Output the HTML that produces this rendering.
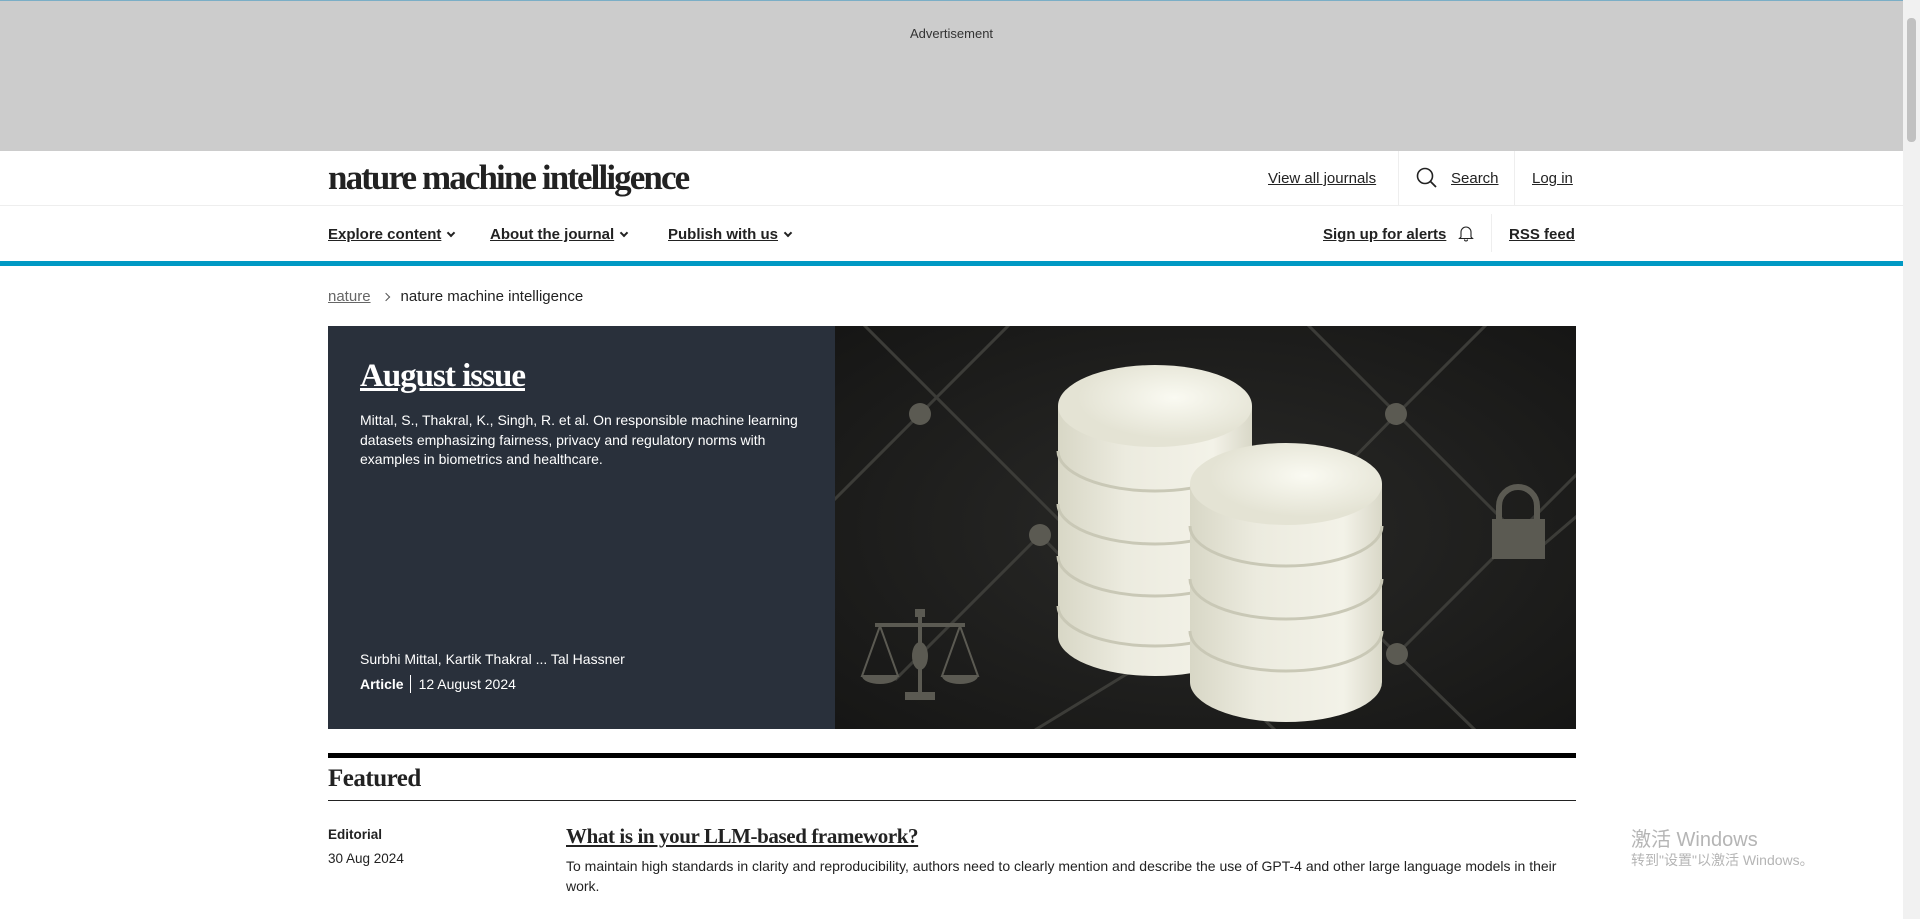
<!DOCTYPE html>
<html><head><meta charset="utf-8"><style>
*{margin:0;padding:0;box-sizing:border-box}
body{width:1920px;height:919px;overflow:hidden;background:#fff;font-family:"Liberation Sans",sans-serif;color:#222;position:relative}
.abs{position:absolute}
a{color:#222}
.sb{position:absolute;right:0;top:0;width:17px;height:919px;background:#f1f1f1}
.sb div{position:absolute;left:4px;top:18px;width:9px;height:124px;background:#c1c1c1;border-radius:4px}
.ad{position:absolute;left:0;top:0;width:1903px;height:151px;background:#cccccc;border-top:1px solid #7aaec6}
.ad span{position:absolute;left:0;width:100%;top:25px;text-align:center;font-size:13px;color:#333}
.logo{left:328px;top:158px;font-family:"Liberation Serif",serif;font-weight:bold;font-size:35px;letter-spacing:-1.9px;color:#222;white-space:nowrap}
.hl{left:0;width:1903px;height:1px;background:#eee}
.nav{top:226px;font-size:15px;font-weight:bold;text-decoration:underline;white-space:nowrap}
.chev{display:inline-block;width:6px;height:6px;border-right:2px solid #222;border-bottom:2px solid #222;transform:rotate(45deg);margin-left:7px;position:relative;top:-3px}
.tl{top:170px;font-size:15px;text-decoration:underline;white-space:nowrap}
.hero{left:328px;top:326px;width:1248px;height:403px;background:#29303b;overflow:hidden}
</style></head><body>
<div class="ad"><span>Advertisement</span></div>
<div class="abs logo">nature machine intelligence</div>
<div class="abs tl" style="left:1268px">View all journals</div>
<div class="abs" style="left:1398px;top:151px;width:1px;height:55px;background:#eee"></div>
<svg class="abs" style="left:1416px;top:167px" width="22" height="22" viewBox="0 0 22 22"><circle cx="9" cy="9" r="7.5" fill="none" stroke="#222" stroke-width="1.6"/><path d="M14.5 14.5L20 20" stroke="#222" stroke-width="1.8"/></svg>
<div class="abs tl" style="left:1451px">Search</div>
<div class="abs" style="left:1514px;top:151px;width:1px;height:55px;background:#eee"></div>
<div class="abs tl" style="left:1532px">Log in</div>
<div class="abs hl" style="top:205px"></div>
<div class="abs nav" style="left:328px">Explore content<span class="chev"></span></div>
<div class="abs nav" style="left:490px">About the journal<span class="chev"></span></div>
<div class="abs nav" style="left:668px">Publish with us<span class="chev"></span></div>
<div class="abs nav" style="left:1323px">Sign up for alerts</div>
<svg class="abs" style="left:1458px;top:224px" width="16" height="18" viewBox="0 0 16 18"><path d="M3 13V8a5 5 0 0 1 10 0v5l1.5 1.5h-13z M6.5 15.5a1.5 1.5 0 0 0 3 0" fill="none" stroke="#222" stroke-width="1.1"/></svg>
<div class="abs" style="left:1491px;top:214px;width:1px;height:38px;background:#eee"></div>
<div class="abs nav" style="left:1509px">RSS feed</div>
<div class="abs" style="left:0;top:261px;width:1903px;height:5px;background:#0099c4"></div>
<div class="abs" style="left:328px;top:288px;font-size:15px;white-space:nowrap"><span style="color:#666;text-decoration:underline">nature</span><span style="display:inline-block;width:6px;height:6px;border-right:1.5px solid #555;border-top:1.5px solid #555;transform:rotate(45deg);margin:0 12px 1px 12px"></span>nature machine intelligence</div>
<div class="abs hero">
<div class="abs" style="left:32px;top:32px;font-family:'Liberation Serif',serif;font-weight:bold;font-size:33px;letter-spacing:-1px;color:#fff;text-decoration:underline">August issue</div>
<div class="abs" style="left:32px;top:85px;width:440px;font-size:14px;line-height:19.5px;color:#fff">Mittal, S., Thakral, K., Singh, R. et al. On responsible machine learning datasets emphasizing fairness, privacy and regulatory norms with examples in biometrics and healthcare.</div>
<div class="abs" style="left:32px;top:325px;font-size:14px;color:#fff;white-space:nowrap">Surbhi Mittal, Kartik Thakral ... Tal Hassner</div>
<div class="abs" style="left:32px;top:349px;font-size:14px;color:#fff;white-space:nowrap"><b>Article</b><span style="display:inline-block;width:1px;height:18px;background:#fff;margin:0 8px -4px 6px"></span>12 August 2024</div>
<svg class="abs" style="left:507px;top:0" width="742" height="404" viewBox="0 0 742 404">
<defs><radialGradient id="bg" cx="50%" cy="50%" r="70%"><stop offset="0" stop-color="#2a2a28"/><stop offset="1" stop-color="#161615"/></radialGradient>
<linearGradient id="cy" x1="0" x2="1"><stop offset="0" stop-color="#d8d7c6"/><stop offset=".35" stop-color="#ecebdf"/><stop offset=".8" stop-color="#f3f2e8"/><stop offset="1" stop-color="#d9d8c8"/></linearGradient>
<radialGradient id="tp" cx="60%" cy="40%"><stop offset="0" stop-color="#fafaf2"/><stop offset="1" stop-color="#e4e3d4"/></radialGradient></defs>
<rect width="742" height="404" fill="url(#bg)"/>
<g stroke="#3c3c38" stroke-width="3" fill="none">
<path d="M0 -30L330 300L440 404M85 88L-40 213M85 88L210 -37M205 209L323 329L200 404M205 209L60 354M323 329L440 212L562 88L440 -34M562 88L700 226L742 190M562 88L680 -30M562 328L742 148M562 328L640 404M442 210L562 328"/>
</g>
<g fill="#5b5a52"><ellipse cx="85" cy="88" rx="11" ry="11"/><ellipse cx="561" cy="88" rx="11" ry="11"/><ellipse cx="205" cy="209" rx="11" ry="11"/><ellipse cx="323" cy="329" rx="11" ry="11"/><ellipse cx="562" cy="328" rx="11" ry="11"/>
<rect x="657" y="193" width="53" height="40"/><path d="M664 195v-15a19 19 0 0 1 38 0v15" fill="none" stroke="#5b5a52" stroke-width="6"/>
<path d="M80 283h10v8h-10zM83 291h4v80h-4zM40 297h90v4h-90zM70 366h30v8h-30z"/><ellipse cx="85" cy="330" rx="8" ry="14"/>
<path d="M27 350h36l-18 -50zM107 350h36l-18 -50z" fill="none" stroke="#5b5a52" stroke-width="2"/><path d="M27 350h36a18 8 0 0 1 -36 0zM107 350h36a18 8 0 0 1 -36 0z"/></g>
<g>
<path d="M223 80v230a97 40 0 0 0 194 0v-230z" fill="url(#cy)"/>
<g fill="none" stroke="#c9c8b6" stroke-width="3"><path d="M223 125a97 40 0 0 0 194 0M223 178a97 40 0 0 0 194 0M223 230a97 40 0 0 0 194 0M223 280a97 40 0 0 0 194 0"/></g>
<ellipse cx="320" cy="80" rx="97" ry="41" fill="url(#tp)"/>
<path d="M355 158v198a96 40 0 0 0 192 0v-198z" fill="url(#cy)"/>
<g fill="none" stroke="#c9c8b6" stroke-width="3"><path d="M355 200a96 40 0 0 0 192 0M355 253a96 40 0 0 0 192 0M355 305a96 40 0 0 0 192 0"/></g>
<ellipse cx="451" cy="158" rx="96" ry="41" fill="url(#tp)"/>
</g>
</svg>
</div>
<div class="abs" style="left:328px;top:753px;width:1248px;height:5px;background:#000"></div>
<div class="abs" style="left:328px;top:765px;font-family:'Liberation Serif',serif;font-weight:bold;font-size:25px;letter-spacing:-0.5px;color:#222">Featured</div>
<div class="abs" style="left:328px;top:800px;width:1248px;height:1px;background:#222"></div>
<div class="abs" style="left:328px;top:827px;font-size:13.5px;font-weight:bold">Editorial</div>
<div class="abs" style="left:328px;top:851px;font-size:13.5px">30 Aug 2024</div>
<div class="abs" style="left:566px;top:824px;font-family:'Liberation Serif',serif;font-weight:bold;font-size:21px;letter-spacing:-0.4px;text-decoration:underline">What is in your LLM-based framework?</div>
<div class="abs" style="left:566px;top:856px;width:1000px;font-size:14px;line-height:20px">To maintain high standards in clarity and reproducibility, authors need to clearly mention and describe the use of GPT-4 and other large language models in their work.</div>
<div class="abs" style="left:1631px;top:823px;font-size:20px;color:#b5b5b5;font-family:'Liberation Sans','Noto Sans CJK SC',sans-serif">激活 Windows</div>
<div class="abs" style="left:1631px;top:850px;font-size:14px;color:#b5b5b5;font-family:'Liberation Sans','Noto Sans CJK SC',sans-serif">转到"设置"以激活 Windows。</div>
<div class="sb"><div></div></div>
</body></html>
